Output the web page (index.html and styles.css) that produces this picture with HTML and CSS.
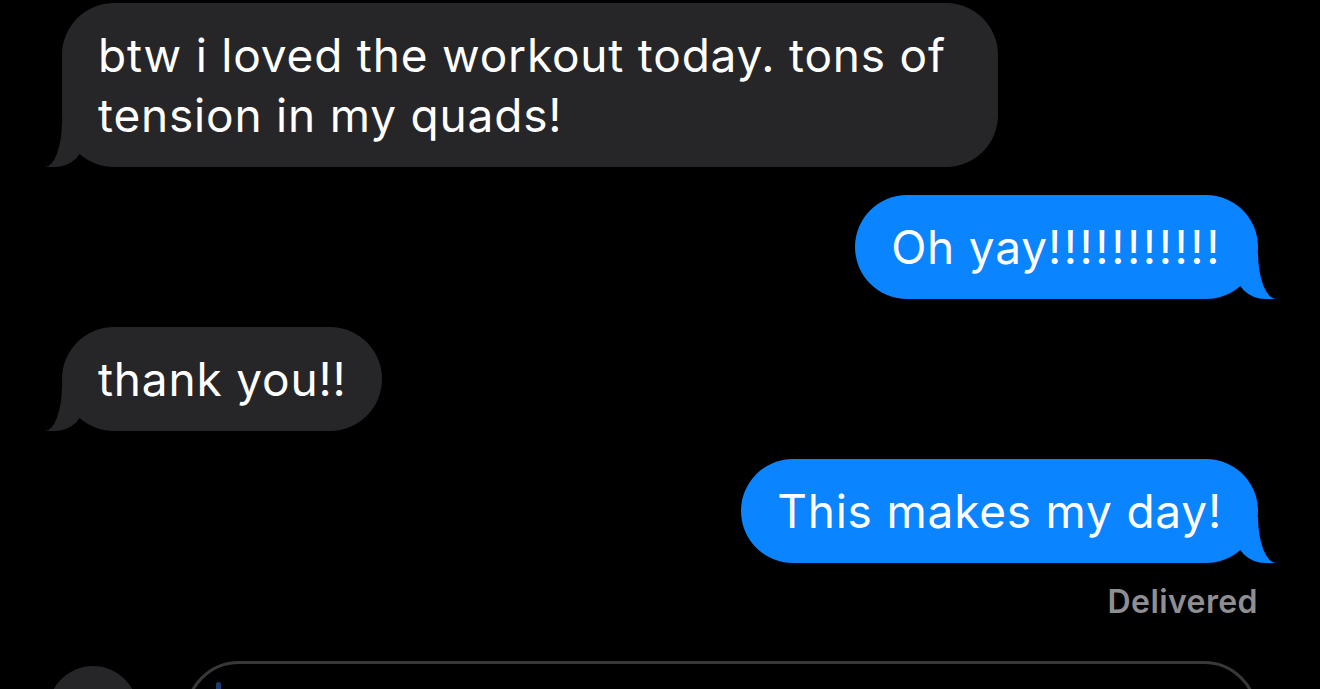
FILE: index.html
```html
<!DOCTYPE html>
<html lang="en">
<head>
    <meta charset="UTF-8">
    <meta name="viewport" content="width=device-width, initial-scale=1.0">
    <title>Messages</title>
    <link rel="stylesheet" href="styles.css">
</head>
<body>
    <div class="thread">
        <div class="msg them wrapped">btw i loved the workout today. tons of<br>tension in my quads!</div>
        <div class="msg me">Oh yay<span class="bang">!!!!!!!!!!!</span></div>
        <div class="msg them">thank you!!</div>
        <div class="msg me">This makes my day!</div>
        <div class="status">Delivered</div>
    </div>

    <div class="composer">
        <div class="plus"></div>
        <div class="field"><span class="cursor"></span></div>
    </div>
</body>
</html>
```

FILE: styles.css
```css
html, body {
    margin: 0;
    background-color: #000;
    height: 100%;
    overflow: hidden;
}
body {
    display: flex;
    flex-direction: column;
    font-family: Inter, "Noto Sans", sans-serif;
    color: #fff;
}
.thread {
    flex: none;
    display: flex;
    flex-direction: column;
    gap: 28px;
    padding: 3px 62px 0 62px;
}
.msg {
    position: relative;
    font-size: 46px;
    line-height: 60px;
    letter-spacing: 0.8px;
    padding: 22px 36px;
    border-radius: 52px;
    max-width: fit-content;
}
.msg.wrapped {
    padding-right: 52px;
}
.bang {
    letter-spacing: 2.6px;
}
.them {
    align-self: flex-start;
    background-color: #262629;
}
.me {
    align-self: flex-end;
    background-color: #0a84ff;
}

/* bubble tails */
.msg::before,
.msg::after {
    content: "";
    position: absolute;
    bottom: 0;
    height: 46px;
}
.them::before {
    left: -17px;
    width: 40px;
    background-color: #262629;
    border-bottom-right-radius: 30px;
}
.them::after {
    left: -17px;
    width: 17px;
    background-color: #000;
    border-bottom-right-radius: 17px 46px;
}
.me::before {
    right: -18px;
    width: 41px;
    background-color: #0a84ff;
    border-bottom-left-radius: 30px;
}
.me::after {
    right: -18px;
    width: 18px;
    background-color: #000;
    border-bottom-left-radius: 18px 46px;
}

.status {
    align-self: flex-end;
    margin-top: -8px;
    font-size: 32px;
    line-height: 38px;
    letter-spacing: 0.4px;
    font-weight: 600;
    color: #8e8e93;
}
.composer {
    flex: 1;
    min-height: 0;
    overflow: hidden;
    display: flex;
    align-items: flex-start;
    gap: 47px;
    padding: 40px 0 0 48px;
}
.plus {
    flex: none;
    width: 90px;
    height: 90px;
    margin-top: 5px;
    border-radius: 50%;
    background-color: #262629;
}
.field {
    flex: 1;
    height: 90px;
    margin-right: 62px;
    border: 3px solid #38383a;
    border-radius: 54px;
    padding: 18px 0 0 28px;
}
.cursor {
    display: block;
    width: 5px;
    height: 40px;
    border-radius: 3px;
    background-color: #1d3b72;
}
```
